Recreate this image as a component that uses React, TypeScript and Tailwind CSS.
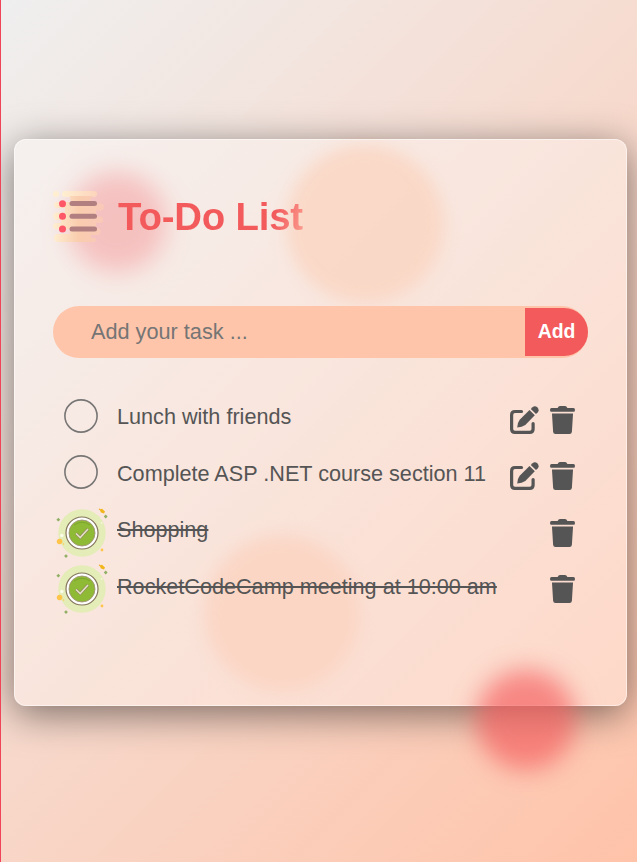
type Task = { title: string; done: boolean };

const tasks: Task[] = [
  { title: "Lunch with friends", done: false },
  { title: "Complete ASP .NET course section 11", done: false },
  { title: "Shopping", done: true },
  { title: "RocketCodeCamp meeting at 10:00 am", done: true },
];

function ListIcon() {
  return (
    <svg width="52" height="52" viewBox="0 0 52 52" className="shrink-0">
      <defs>
        <linearGradient id="cloud" x1="0" y1="0" x2="1" y2="0">
          <stop offset="0" stopColor="#ffeed0" />
          <stop offset="0.5" stopColor="#f9cdae" />
          <stop offset="1" stopColor="#fac8b8" />
        </linearGradient>
        <linearGradient id="cloudLight" x1="0" y1="0" x2="1" y2="0">
          <stop offset="0" stopColor="#ffefd2" />
          <stop offset="1" stopColor="#fcd4bb" />
        </linearGradient>
      </defs>
      <circle cx="3" cy="3" r="3" fill="#ffeed0" />
      <rect x="9" y="0" width="35" height="6" rx="3" fill="url(#cloudLight)" />
      <path
        d="M17 5H40Q35 9 40 12.500H47.500A3.500 3.500 0 0 1 47.500 19.500H43V25.500H47.500A3.300 3.300 0 0 1 47.500 32H43V37H44A3.500 3.500 0 0 1 44 44H38V47H41Q43 47 43 49T41 51H5A4 4 0 0 1 5 43H17V38H3A3 3 0 0 1 3 32H8V29H4A3.700 3.700 0 0 1 4 21.500H12V17H4A3 3 0 0 1 4 11H18Z"
        fill="url(#cloud)"
      />
      <g fill="#ff5768">
        <circle cx="9.500" cy="12.700" r="3.500" />
        <circle cx="9.500" cy="25.300" r="3.500" />
        <circle cx="9.500" cy="38" r="3.500" />
      </g>
      <g fill="#b17f80">
        <rect x="16.500" y="10" width="27.500" height="5" rx="2.500" />
        <rect x="16.500" y="22.800" width="27.500" height="5" rx="2.500" />
        <rect x="16.500" y="35.600" width="27.500" height="5" rx="2.500" />
      </g>
    </svg>
  );
}

function DoneIcon() {
  return (
    <svg width="52" height="52" viewBox="0 0 52 52" className="mt-[3px] shrink-0">
      <circle cx="26" cy="27" r="23.700" fill="#e4ecb7" />
      <circle cx="26" cy="27" r="16" fill="#fff" stroke="#85765f" strokeWidth="1.200" />
      <circle cx="26" cy="27" r="13" fill="#8fba35" stroke="#a39479" strokeWidth="0.900" />
      <path d="M18 19Q26 13.500 34 19" fill="none" stroke="#7da62e" strokeWidth="1" />
      <path d="M20 27.500L24.200 31.500L32 23" fill="none" stroke="#91845b" strokeWidth="2.900" />
      <path d="M20 27.500L24.200 31.500L32 23" fill="none" stroke="#e2e3c5" strokeWidth="1.600" />
      <g fill="#ffc54b">
        <circle cx="3.600" cy="35.500" r="2.800" />
        <circle cx="46" cy="44" r="1.400" />
        <circle cx="7.500" cy="38" r="0.700" />
      </g>
      <path d="M43.500 3.500L46 2.700L49 5.500L48 7.500L45 6.500Z" fill="#f2b51c" />
      <circle cx="43.500" cy="3.200" r="0.700" fill="#edaf25" />
      <circle cx="5.800" cy="29.500" r="1.800" fill="#fafbe9" />
      <circle cx="45.500" cy="17" r="0.900" fill="#f3f6dc" />
      <g fill="#91af64">
        <path d="M2.300 11.800l1.900 1.900-1.900 1.900L.4 13.700z" />
        <path d="M49.700 8.600l1.900 1.900-1.900 1.900-1.900-1.900z" />
        <path d="M10 48.300l1.900 1.800-1.900 1.800-1.900-1.800z" />
      </g>
    </svg>
  );
}

function EditIcon() {
  return (
    <svg width="29" height="28" viewBox="0 0 29 28" fill="currentColor">
      <path
        d="M11.500 5.500H5Q1.600 5.500 1.600 8.900V23Q1.600 26.400 5 26.400H19.700Q23.100 26.400 23.100 23V17.500"
        fill="none"
        stroke="currentColor"
        strokeWidth="3.200"
        strokeLinecap="round"
      />
      <path d="M19.500 4L24.800 9.300L15.300 19Q12 21.300 7.200 21.600Q7.400 16.500 9.700 13.800Z" />
      <path d="M20.800 2.900L22.500 1.200Q25 -0.700 27.500 1.500Q29.600 4 27.800 6.300L26 8.100Z" />
    </svg>
  );
}

function TrashIcon() {
  return (
    <svg width="25" height="28" viewBox="0 0 25 28" fill="currentColor">
      <path d="M1.500 2H7.600Q8.400 0 10 0H15Q16.600 0 17.400 2H23.500Q25 2 25 3.900T23.500 5.800H1.500Q0 5.800 0 3.900T1.500 2Z" />
      <path d="M2 7.400H23L21.900 25.800Q21.700 28 19.500 28H5.500Q3.300 28 3.100 25.800Z" />
    </svg>
  );
}

function TaskRow({ task }: { task: Task }) {
  return (
    <li className="flex h-[56.5px] items-center">
      <div className="flex w-[58px] shrink-0 justify-center">
        {task.done ? (
          <DoneIcon />
        ) : (
          <svg width="34" height="34" viewBox="0 0 34 34" className="mb-[3px] mr-[2px]">
            <circle cx="17" cy="17" r="16.100" fill="none" stroke="#777675" strokeWidth="1.600" />
          </svg>
        )}
      </div>
      <span
        className={
          task.done
            ? "ml-[6px] grow whitespace-nowrap text-[21.63px] leading-[26px] text-[#555] line-through"
            : "ml-[6px] grow whitespace-nowrap text-[21.63px] leading-[26px] text-[#555]"
        }
      >
        {task.title}
      </span>
      <div className="mt-[5px] flex items-center gap-[11px] pr-[13px] text-[#555]">
        {!task.done && <EditIcon />}
        <TrashIcon />
      </div>
    </li>
  );
}

export default function App() {
  return (
    <main className="relative isolate h-[862px] w-[637px] overflow-hidden border-l border-[#f04458] bg-[linear-gradient(135deg,#efefef_0%,#ffc3a9_100%)] px-[13px] pt-[139px] font-['Liberation_Sans',Arial,sans-serif]">
      <div className="absolute left-[66px] top-[172px] -z-10 size-[100px] rounded-full bg-[#ef5a5e]/45 blur-[12px]" />
      <div className="absolute left-[285px] top-[145px] -z-10 size-[158px] rounded-full bg-[#f9c3a6]/80 blur-[8px]" />
      <div className="absolute left-[203px] top-[535px] -z-10 size-[156px] rounded-full bg-[#f9c1a6]/80 blur-[8px]" />

      <section className="h-[567px] w-[613px] rounded-[12px] border border-white/50 bg-white/30 px-[38px] pt-[50px] shadow-[0_8px_38px_rgba(0,0,0,0.5)]">
        <header className="flex h-[54px] items-center">
          <ListIcon />
          <h1 className="ml-[13px] bg-[linear-gradient(105deg,#f25a5c_0%,#f25a5c_82%,#fb9f91_100%)] bg-clip-text text-[38.4px] font-bold leading-[50px] tracking-[-0.2px] text-transparent">
            To-Do List
          </h1>
        </header>

        <form className="mt-[62px] flex h-[52px] items-center rounded-full bg-[#ffc5aa] py-[2px]" onSubmit={(e) => e.preventDefault()}>
          <input
            placeholder="Add your task ..."
            className="h-full min-w-0 grow bg-transparent pl-[38px] text-[21.7px] outline-none placeholder:text-[#757575]"
          />
          <button className="h-full w-[63px] shrink-0 rounded-r-full bg-[#f25a5c] text-[19.4px] font-bold text-white">
            Add
          </button>
        </form>

        <ul className="mt-[31px]">
          {tasks.map((task) => (
            <TaskRow key={task.title} task={task} />
          ))}
        </ul>
      </section>

      <div className="absolute left-[475px] top-[670px] size-[100px] rounded-full bg-[#f55a5c]/65 blur-[12px]" />
    </main>
  );
}
